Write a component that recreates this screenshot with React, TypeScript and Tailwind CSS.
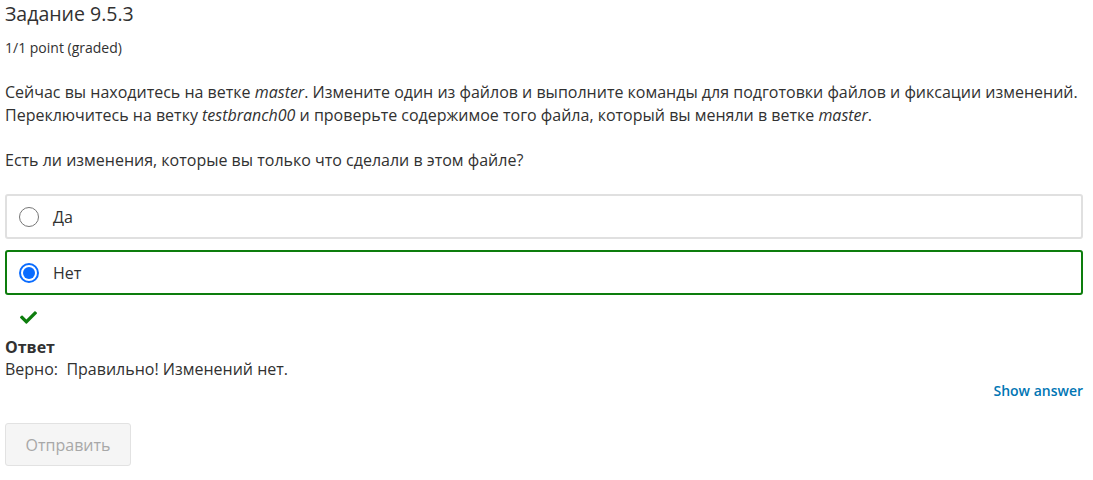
const options = [
  { label: "Да", checked: false },
  { label: "Нет", checked: true },
];

export default function App() {
  return (
    <div
      className="bg-white text-[#313131] pl-[5px] pr-[10px]"
      style={{ fontFamily: '"Open Sans", sans-serif' }}
    >
      <h2 className="text-[19.5px] leading-[28px] text-[#313131]">Задание 9.5.3</h2>
      <div className="text-[14px] leading-[20px] mt-[10px] text-[#313131]">1/1 point (graded)</div>

      <div className="mt-[23px] text-[16px] leading-[23px]">
        <p>
          Сейчас вы находитесь на ветке <em>master</em>. Измените один из файлов и выполните команды для
          подготовки файлов и фиксации изменений. Переключитесь на ветку <em>testbranch00</em> и проверьте
          содержимое того файла, который вы меняли в ветке <em>master</em>.
        </p>
        <p className="mt-[22px]">Есть ли изменения, которые вы только что сделали в этом файле?</p>
      </div>

      {/* options */}
      <div className="mt-[22px] flex flex-col gap-[11px]">
        {options.map((o) => (
          <label
            key={o.label}
            className={`flex items-center h-[45px] rounded-[3px] border-2 px-[12px] ${
              o.checked ? "border-[#0d7d0d]" : "border-[#e0e0e0]"
            }`}
          >
            <span
              className={`w-[20px] h-[20px] rounded-full flex items-center justify-center ${
                o.checked ? "border-2 border-[#0a6cff]" : "border border-[#767676]"
              }`}
            >
              {o.checked && <span className="w-[12px] h-[12px] rounded-full bg-[#0a6cff]" />}
            </span>
            <span className="ml-[14px] text-[16px]">{o.label}</span>
          </label>
        ))}
      </div>

      <div className="mt-[14px] pl-[15px] h-[16px] flex items-center">
        <svg viewBox="0 0 512 512" className="w-[17px] h-[17px]" fill="#0d7d0d">
          <path d="M173.9 439.4l-166.4-166.4c-10-10-10-26.2 0-36.2l36.2-36.2c10-10 26.2-10 36.2 0L192 312.7 432.1 72.6c10-10 26.2-10 36.2 0l36.2 36.2c10 10 10 26.2 0 36.2L210.1 439.4c-10 10-26.2 10-36.2 0z" />
        </svg>
      </div>

      <div className="mt-[11px] text-[16px] leading-[22px]">
        <div className="font-bold">Ответ</div>
        <div>Верно:&nbsp; Правильно! Изменений нет.</div>
      </div>

      <div className="flex justify-end mt-[1px]">
        <button className="text-[14px] font-semibold text-[#0075b4] leading-[20px]">Show answer</button>
      </div>

      <div className="mt-[22px] pb-[15px]">
        <button className="w-[126px] h-[43px] rounded-[3px] border border-[#e2e2e2] bg-[#f5f5f5] text-[#a8a8a8] text-[16px]">
          Отправить
        </button>
      </div>
    </div>
  );
}
